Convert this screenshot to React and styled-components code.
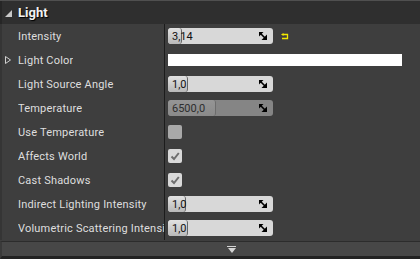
import React from 'react';
import styled, { createGlobalStyle, css } from 'styled-components';

const Global = createGlobalStyle`
  html, body { margin: 0; padding: 0; background: #3e3e3e; }
  body { font-family: Roboto, "Liberation Sans", sans-serif; }
`;

const rows = [
  { label: 'Intensity', kind: 'number', value: '3,14', fill: 14, reset: true },
  { label: 'Light Color', kind: 'color', expander: true },
  { label: 'Light Source Angle', kind: 'number', value: '1,0', fill: 20 },
  { label: 'Temperature', kind: 'number', value: '6500,0', fill: 48, disabled: true },
  { label: 'Use Temperature', kind: 'check', checked: false, disabled: true },
  { label: 'Affects World', kind: 'check', checked: true },
  { label: 'Cast Shadows', kind: 'check', checked: true },
  { label: 'Indirect Lighting Intensity', kind: 'number', value: '1,0', fill: 18 },
  { label: 'Volumetric Scattering Intensity', kind: 'number', value: '1,0', fill: 20 },
];

const DragIcon = () => (
  <svg width="8" height="8" viewBox="0 0 8 8">
    <path d="M0 0 H4.5 L0 4.5 Z" fill="#000" />
    <path d="M8 8 H2.5 L8 2.5 Z" fill="#000" />
    <path d="M1 1 L7 7" stroke="#000" strokeWidth="1.6" />
  </svg>
);

const ResetIcon = () => (
  <svg width="8" height="7" viewBox="0 0 8 7">
    <path d="M2 1.5 H6.5 V5.5 H1" fill="none" stroke="#f2e800" strokeWidth="1.3" />
    <path d="M0 1.5 L2.5 0 V3 Z" fill="#f2e800" />
  </svg>
);

const CheckIcon = () => (
  <svg width="10" height="10" viewBox="0 0 10 10">
    <path d="M1.5 5.5 L4 8 L8.8 2" fill="none" stroke="#6e6e6e" strokeWidth="2" />
  </svg>
);

const ExpandIcon = () => (
  <svg width="6" height="8" viewBox="0 0 6 8">
    <path d="M0.5 0.5 L5.5 4 L0.5 7.5 Z" fill="none" stroke="#d0d0d0" strokeWidth="1" />
  </svg>
);

const App = () => (
  <>
    <Global />
    <Panel>
      <Header>
        <Collapse />
        <Title>Light</Title>
      </Header>
      <Body>
        {rows.map((r) => (
          <Row key={r.label}>
            <LabelCell>
              <Expander>{r.expander && <ExpandIcon />}</Expander>
              <LabelText>{r.label}</LabelText>
            </LabelCell>
            <ValueCell>
              {r.kind === 'number' && (
                <>
                  <NumberBox disabled={r.disabled}>
                    <Fill disabled={r.disabled} style={{ width: r.fill }} />
                    <NumberText disabled={r.disabled}>{r.value}</NumberText>
                    <DragIcon />
                  </NumberBox>
                  {r.reset && (
                    <Reset>
                      <ResetIcon />
                    </Reset>
                  )}
                </>
              )}
              {r.kind === 'color' && <ColorBar />}
              {r.kind === 'check' && (
                <Check disabled={r.disabled}>{r.checked && <CheckIcon />}</Check>
              )}
            </ValueCell>
          </Row>
        ))}
      </Body>
      <Footer>
        <MoreArrow />
      </Footer>
    </Panel>
  </>
);

export default App;

const Panel = styled.div`
  width: 420px;
  height: 259px;
  display: flex;
  flex-direction: column;
  background: #3e3e3e;
  border-top: 1px solid #505050;
  box-sizing: border-box;
  overflow: hidden;
`;

const Header = styled.div`
  height: 23px;
  display: flex;
  align-items: center;
  background: #2f2f2f;
  border-left: 2px solid #262626;
  padding-left: 3px;
`;

const Collapse = styled.span`
  width: 0;
  height: 0;
  border-left: 7px solid transparent;
  border-bottom: 7px solid #c8c8c8;
  margin-right: 6px;
  margin-top: 1px;
`;

const Title = styled.span`
  color: #f2f2f2;
  font-weight: 700;
  font-size: 13px;
  text-shadow: 1px 1px 1px #000;
`;

const Body = styled.div`
  display: flex;
  flex-direction: column;
  border-left: 2px solid #353535;
`;

const Row = styled.div`
  height: 24px;
  display: grid;
  grid-template-columns: 163px 1fr;
`;

const LabelCell = styled.div`
  display: flex;
  align-items: center;
  min-width: 0;
  border-right: 1px solid #1c1c1c;
  padding-left: 3px;
  overflow: hidden;
  white-space: nowrap;
`;

const Expander = styled.span`
  display: flex;
  flex: none;
  width: 13px;
`;

const LabelText = styled.span`
  min-width: 0;
  overflow: hidden;
  color: #dedede;
  font-size: 11px;
  letter-spacing: 0.2px;
`;

const ValueCell = styled.div`
  display: flex;
  align-items: center;
  padding-left: 3px;
`;

const NumberBox = styled.div(
  ({ disabled }) => css`
    position: relative;
    width: 105px;
    height: 16px;
    box-sizing: border-box;
    border-radius: 3px;
    background: ${disabled ? '#858585' : '#d8d8d8'};
    display: flex;
    align-items: center;
    justify-content: space-between;
    padding: 0 6px 0 4px;
    overflow: hidden;
  `
);

const Fill = styled.div(
  ({ disabled }) => css`
    position: absolute;
    left: 0;
    top: 0;
    bottom: 0;
    border-radius: 3px;
    background: ${disabled
      ? 'linear-gradient(#959595, #8a8a8a)'
      : 'linear-gradient(#e2e2e2, #b9b9b9)'};
    border-right: 1px solid ${disabled ? '#6c6c6c' : '#666'};
    box-sizing: border-box;
  `
);

const NumberText = styled.span(
  ({ disabled }) => css`
    position: relative;
    font-size: 11px;
    color: ${disabled ? '#2e2e2e' : '#111'};
  `
);

const Reset = styled.span`
  display: flex;
  margin-left: 8px;
`;

const ColorBar = styled.div`
  width: 234px;
  height: 12px;
  background: #fff;
`;

const Check = styled.div(
  ({ disabled }) => css`
    width: 14px;
    height: 14px;
    border-radius: 2px;
    background: ${disabled ? '#a9a9a9' : '#d9d9d9'};
    display: flex;
    align-items: center;
    justify-content: center;
  `
);

const Footer = styled.div`
  margin-top: 1px;
  border-top: 1px solid #2c2c2c;
  height: 14px;
  background: #474747;
  border-left: 2px solid #3a3a3a;
  border-bottom: 3px solid #222;
  display: flex;
  align-items: center;
  padding-left: 225px;
`;

const MoreArrow = styled.span`
  display: flex;
  flex-direction: column;
  align-items: center;
  &::before {
    content: '';
    width: 9px;
    height: 1px;
    background: #d4d4d4;
    margin-bottom: 1px;
  }
  &::after {
    content: '';
    width: 0;
    height: 0;
    border-left: 4.5px solid transparent;
    border-right: 4.5px solid transparent;
    border-top: 5px solid #d4d4d4;
  }
`;
